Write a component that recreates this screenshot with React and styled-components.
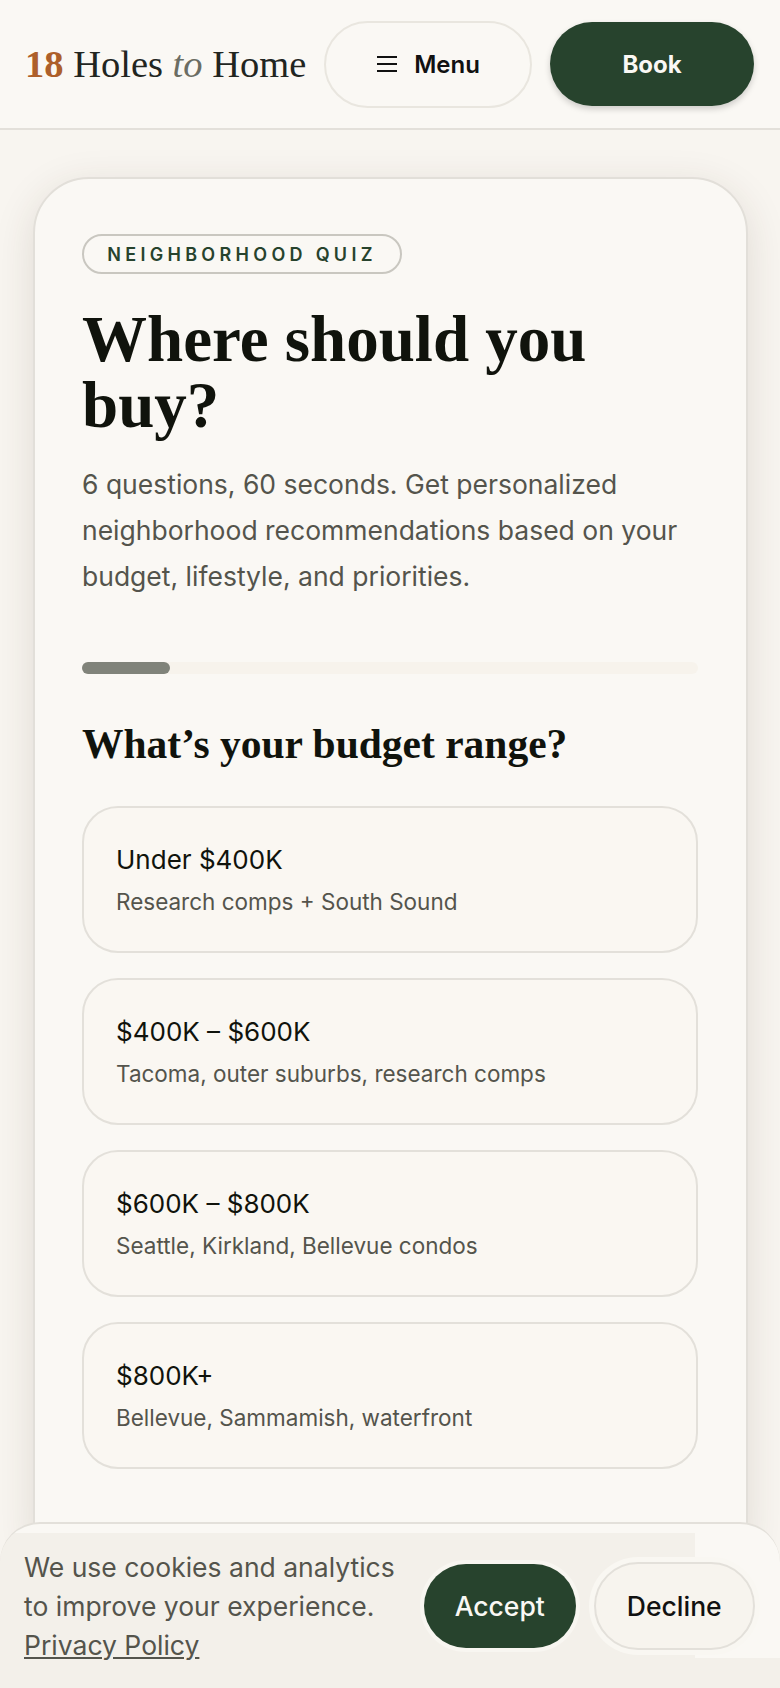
import styled, { createGlobalStyle } from "styled-components"

const GlobalStyle = createGlobalStyle`
    html, body {
        margin: 0;
        padding: 0;
        background: #f8f5f0;
        font-family: "Inter", "Noto Sans", sans-serif;
    }
    * {
        box-sizing: border-box;
    }
`;

const options = [
    { title: "Under $400K", text: "Research comps + South Sound" },
    { title: "$400K – $600K", text: "Tacoma, outer suburbs, research comps" },
    { title: "$600K – $800K", text: "Seattle, Kirkland, Bellevue condos" },
    { title: "$800K+", text: "Bellevue, Sammamish, waterfront" },
];

export default function App() {
    return (
        <Page>
            <GlobalStyle />
            <Header>
                <Logo>
                    <LogoNumber>18</LogoNumber> Holes <LogoItalic>to</LogoItalic> Home
                </Logo>
                <MenuButton>
                    <svg width="22" height="20" viewBox="0 0 22 20" fill="none" stroke="#111" strokeWidth="2">
                        <path d="M1 3h20M1 10h20M1 17h20" />
                    </svg>
                    Menu
                </MenuButton>
                <BookButton>Book</BookButton>
            </Header>
            <Main>
                <Card>
                    <Badge>NEIGHBORHOOD QUIZ</Badge>
                    <Title>Where should you buy?</Title>
                    <Intro>
                        6 questions, 60 seconds. Get personalized neighborhood
                        recommendations based on your budget, lifestyle, and priorities.
                    </Intro>
                    <Track>
                        <Fill style={{ width: `${(1 / 7) * 100}%` }} />
                    </Track>
                    <Question>What’s your budget range?</Question>
                    <OptionList>
                        {options.map((o) => (
                            <Option key={o.title}>
                                <OptionTitle>{o.title}</OptionTitle>
                                <OptionText>{o.text}</OptionText>
                            </Option>
                        ))}
                    </OptionList>
                </Card>
            </Main>
            <Cookie>
                <CookieText>
                    We use cookies and analytics to improve your experience.{" "}
                    <PolicyLink>Privacy Policy</PolicyLink>
                </CookieText>
                <AcceptButton>Accept</AcceptButton>
                <DeclineButton>Decline</DeclineButton>
            </Cookie>
        </Page>
    )
}

const Page = styled.div`
    position: relative;
    width: 780px;
    height: 1688px;
    overflow: hidden;
    background: #f8f5f0;
`;

const Header = styled.header`
    display: flex;
    align-items: center;
    height: 130px;
    padding: 0 26px 0 25px;
    background: #faf8f4;
    border-bottom: 2px solid #e3e0da;
`;

const Logo = styled.div`
    flex: 1;
    font-family: "Liberation Serif", serif;
    font-size: 38.5px;
    color: #22251f;
    white-space: nowrap;
`;

const LogoNumber = styled.span`
    color: #ad5f2a;
    font-weight: 700;
`;

const LogoItalic = styled.em`
    color: #6b6d63;
`;

const MenuButton = styled.button`
    display: flex;
    align-items: center;
    justify-content: center;
    gap: 16px;
    width: 208px;
    height: 87px;
    margin-right: 18px;
    border: 2px solid #e9e6df;
    border-radius: 44px;
    background: #faf8f4;
    font-family: "Inter", sans-serif;
    font-size: 24px;
    font-weight: 600;
    color: #111;
`;

const BookButton = styled.button`
    width: 204px;
    height: 84px;
    border: none;
    border-radius: 42px;
    background: #27432d;
    box-shadow: 0 3px 6px rgba(0, 0, 0, 0.18);
    font-family: "Inter", sans-serif;
    font-size: 24px;
    font-weight: 700;
    color: #faf8f4;
`;

const Main = styled.main`
    padding: 47px 32px 0 33px;
`;

const Card = styled.section`
    height: 1400px;
    padding: 55px 48px 0 47px;
    background: #faf8f4;
    border: 2px solid #e2dfd9;
    border-radius: 56px;
    box-shadow: 0 10px 40px rgba(60, 50, 30, 0.13);
`;

const Badge = styled.div`
    display: inline-flex;
    align-items: center;
    justify-content: center;
    width: 320px;
    height: 40px;
    border: 2px solid #c9c7c0;
    border-radius: 20px;
    font-size: 18px;
    font-weight: 600;
    letter-spacing: 4.3px;
    color: #27432d;
`;

const Title = styled.h1`
    margin: 32px 0 0;
    font-family: "Liberation Serif", serif;
    font-size: 65px;
    line-height: 66px;
    font-weight: 700;
    color: #10130c;
`;

const Intro = styled.p`
    margin: 23px 0 0;
    font-size: 26.5px;
    line-height: 46px;
    color: #54544c;
`;

const Track = styled.div`
    height: 12px;
    margin-top: 63px;
    border-radius: 6px;
    background: #f7f3ec;
`;

const Fill = styled.div`
    height: 100%;
    border-radius: 6px;
    background: #80837a;
`;

const Question = styled.h2`
    margin: 45px 0 0;
    font-family: "Liberation Serif", serif;
    font-size: 41.5px;
    line-height: 50px;
    font-weight: 700;
    color: #10130c;
`;

const OptionList = styled.div`
    display: flex;
    flex-direction: column;
    gap: 25px;
    margin-top: 37px;
`;

const Option = styled.div`
    display: flex;
    flex-direction: column;
    justify-content: center;
    height: 147px;
    padding: 0 32px;
    background: #faf7f2;
    border: 2px solid #e3e0da;
    border-radius: 36px;
`;

const OptionTitle = styled.div`
    font-size: 26px;
    line-height: 40px;
    color: #10130c;
`;

const OptionText = styled.div`
    margin-top: 5px;
    font-size: 22.5px;
    line-height: 34px;
    color: #54544c;
`;

const Cookie = styled.aside`
    position: absolute;
    left: 0;
    right: 0;
    bottom: 0;
    display: flex;
    align-items: center;
    height: 166px;
    padding: 0 25px 0 24px;
    background:
        linear-gradient(#faf8f4, #faf8f4) 0 0 / 100% 9px no-repeat,
        linear-gradient(#faf8f4, #faf8f4) 100% 0 / 85px 134px no-repeat,
        #f3f0ea;
    border-top: 2px solid #e3e0da;
    border-radius: 40px 40px 0 0;
`;

const CookieText = styled.p`
    flex: none;
    width: 400px;
    margin: 0 auto 0 0;
    font-size: 26.5px;
    line-height: 39px;
    color: #54544c;
`;

const PolicyLink = styled.a`
    color: #54544c;
    text-decoration: underline;
`;

const AcceptButton = styled.button`
    width: 152px;
    height: 84px;
    margin-right: 18px;
    border: none;
    border-radius: 42px;
    background: #27432d;
    box-shadow: 0 0 0 4px #f8f6f1;
    font-family: "Inter", sans-serif;
    font-size: 26.5px;
    font-weight: 500;
    color: #faf8f4;
`;

const DeclineButton = styled.button`
    width: 162px;
    height: 88px;
    border: 2px solid #e3e0da;
    border-radius: 44px;
    background: #f7f4ee;
    box-shadow: 0 0 0 5px #f9f7f2;
    font-family: "Inter", sans-serif;
    font-size: 26.5px;
    font-weight: 500;
    color: #111;
`;
